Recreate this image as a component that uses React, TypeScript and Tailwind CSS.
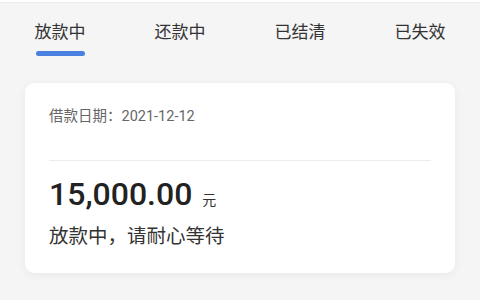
export default function App() {
  const tabs = ['放款中', '还款中', '已结清', '已失效'];
  const active = 0;

  return (
    <div
      className="w-[480px] h-[300px] overflow-hidden bg-[#f5f5f5] text-[#333]"
      style={{ fontFamily: 'Roboto, "Noto Sans CJK SC", sans-serif' }}
    >
      <div className="h-[3px] bg-white border-b border-[#ececec]" />
      {/* tabs */}
      <div className="grid grid-cols-4 pt-[17px]">
        {tabs.map((t, i) => (
          <div key={t} className="flex flex-col items-center">
            <span className="text-[17px] leading-[24px] text-[#333]">{t}</span>
            <span
              className={
                i === active
                  ? 'mt-[7px] h-[5px] w-[49px] rounded-full bg-[#4a80df]'
                  : 'mt-[7px] h-[5px] w-[49px]'
              }
            />
          </div>
        ))}
      </div>

      {/* card */}
      <div className="mx-[25px] mt-[27px] h-[190px] rounded-[9px] bg-white px-[24px] pt-[24px] shadow-[0_2px_10px_rgba(0,0,0,0.06)]">
        <div className="text-[14.5px] leading-[20px] text-[#666]">借款日期：2021-12-12</div>
        <div className="mt-[33px] border-t border-[#ececec]" />
        <div className="mt-[14px] flex items-baseline">
          <span className="text-[32px] leading-[38px] font-medium text-[#222]">15,000.00</span>
          <span className="ml-[10px] text-[14px] text-[#333]">元</span>
        </div>
        <div className="mt-[11px] text-[19.5px] leading-[26px] text-[#333]">放款中，请耐心等待</div>
      </div>
    </div>
  );
}
